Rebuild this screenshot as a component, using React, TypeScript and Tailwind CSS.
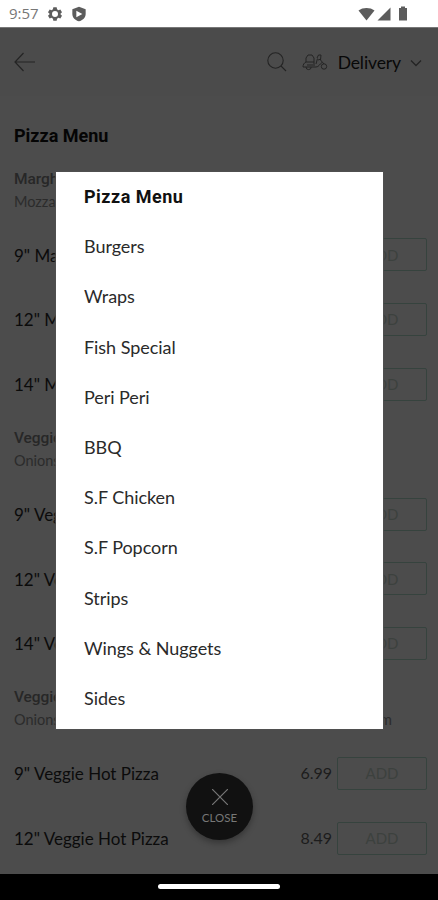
import { clsx } from "clsx";

type Section = { name: string; toppings: string; rows: { name: string; price: string }[] };

const SECTIONS: Section[] = [
  {
    name: "Margherita",
    toppings: "Mozzarella & tomato",
    rows: [
      { name: '9" Margherita', price: "5.99" },
      { name: '12" Margherita', price: "7.49" },
      { name: '14" Margherita', price: "9.49" },
    ],
  },
  {
    name: "Veggie Supreme",
    toppings: "Onions, peppers & olives",
    rows: [
      { name: '9" Veggie Supreme', price: "6.99" },
      { name: '12" Veggie Supreme', price: "8.49" },
      { name: '14" Veggie Supreme', price: "10.49" },
    ],
  },
  {
    name: "Veggie Hot",
    toppings: "Onions, green peppers, jalapenos, chillies & mushroom",
    rows: [
      { name: '9" Veggie Hot Pizza', price: "6.99" },
      { name: '12" Veggie Hot Pizza', price: "8.49" },
    ],
  },
];

const CATEGORIES = [
  "Pizza Menu",
  "Burgers",
  "Wraps",
  "Fish Special",
  "Peri Peri",
  "BBQ",
  "S.F Chicken",
  "S.F Popcorn",
  "Strips",
  "Wings & Nuggets",
  "Sides",
];

function StatusBar() {
  return (
    <div className="flex h-[27px] shrink-0 items-center bg-white pl-[9px] pr-[30px] text-[#5c5c5c]">
      <span className="w-[31px] font-['Open_Sans',sans-serif] text-[15px] leading-none text-[#777]">
        9:57
      </span>
      <svg className="ml-[7px] size-4" viewBox="0 0 24 24" fill="currentColor">
        <path
          fillRule="evenodd"
          d="M9.500 2h5l.6 3 2 1.200 2.900-1 2.500 4.300-2.300 2v1l2.300 2-2.500 4.300-2.900-1-2 1.200-.6 3h-5l-.6-3-2-1.200-2.900 1-2.500-4.300 2.300-2v-1l-2.300-2L4 5.200l2.900 1 2-1.200zM12 7.500a4.500 4.500 0 1 0 0 9a4.500 4.500 0 1 0 0-9z"
        />
      </svg>
      <svg className="ml-[8px] size-4" viewBox="0 0 24 24" fill="currentColor">
        <path
          fillRule="evenodd"
          d="M12 1l10 4v7c0 5.500-4.500 9.500-10 11C6.500 21.500 2 17.500 2 12V5zM8 7v10l9-5z"
        />
      </svg>
      <svg className="ml-auto h-[14px] w-[17px]" viewBox="0 0 17 14" fill="currentColor">
        <path d="M8.500 13.500L.5 3.500C5 .2 12 .2 16.500 3.500z" />
      </svg>
      <svg className="ml-[2px] size-[14px]" viewBox="0 0 14 14" fill="currentColor">
        <path d="M.5 13.500L13.500.5v13z" />
      </svg>
      <svg className="ml-[7px] h-[15px] w-[10px]" viewBox="0 0 10 15" fill="currentColor">
        <path d="M3 .5h4V2h2v12.500H1V2h2z" />
      </svg>
    </div>
  );
}

function Header() {
  return (
    <header className="flex h-[69px] shrink-0 items-center border-t border-[#777] bg-[#4b4b4b] pl-[14px] pr-[16px] text-[#242424]">
      <svg className="h-5 w-[22px]" viewBox="0 0 22 20" fill="none" stroke="currentColor" strokeWidth="1.200">
        <path d="M21 10H1M9.500 1L1 10l8.500 9" />
      </svg>
      <svg className="ml-auto size-5" viewBox="0 0 20 20" fill="none" stroke="currentColor" strokeWidth="1.100">
        <circle cx="8.500" cy="8.500" r="7.700" />
        <path d="M14 14l5 5" />
      </svg>
      <svg
        className="ml-[15px] h-[19px] w-[26px]"
        viewBox="0 0 26 19"
        fill="none"
        stroke="currentColor"
        strokeWidth="1"
      >
        <path d="M4 9V5l2-3h4l2 3v4zM4 9C2 10 1 11.500 1 14h13c3 0 3.500-3 6-4.500M12 13V9M5 12h6M15 5l1.500-3H19l-.5 5 3.500 4M16 7l3-1M15.500 5.500L14 11" />
        <path d="M4 14a2.600 2.600 0 0 0 5.200 0" />
        <circle cx="22" cy="13.500" r="2.700" />
      </svg>
      <span className="ml-[10px] pt-[2px] text-[17.500px] tracking-[-0.100px] text-[#080808]">Delivery</span>
      <svg className="ml-[9px] mt-[2px] h-2 w-3" viewBox="0 0 12 8" fill="none" stroke="currentColor" strokeWidth="1.300">
        <path d="M1 1.500l5 5 5-5" />
      </svg>
    </header>
  );
}

function MenuSection({ section, fill }: { section: Section; fill: boolean }) {
  return (
    <section className="h-[259.300px] shrink-0 text-[#0b0b0b]">
      <h3 className="h-6 font-[Roboto,sans-serif] text-[15.500px] font-medium leading-6 tracking-[-0.100px] text-[#272727]">
        {section.name}
      </h3>
      <p
        className={clsx(
          "h-[23px] text-[14.500px] leading-[22px] text-[#2b2b2b]",
          fill && "w-[378px] [text-align-last:justify]",
        )}
      >
        {section.toppings}
      </p>
      <div className="mt-[9px]">
        {section.rows.map((row) => (
          <div key={row.name} className="flex h-[64.700px] items-center">
            <span className="pt-px text-[17px]">{row.name}</span>
            <span className="ml-auto mr-[5px] text-[16px] text-[#1c1c1c]">{row.price}</span>
            <button className="h-[33px] w-[90px] rounded-[2px] border border-[#36433e] text-[15px] text-[#3c413e]">
              ADD
            </button>
          </div>
        ))}
      </div>
    </section>
  );
}

export default function App() {
  return (
    <div className="relative flex h-[900px] w-[438px] flex-col overflow-hidden bg-[#4c4c4c] font-[Lato,sans-serif]">
      <StatusBar />
      <Header />
      <main className="flex min-h-0 flex-1 flex-col overflow-hidden pl-[14px] pr-[11px]">
        <h2 className="mt-[28px] h-6 shrink-0 font-[Roboto,sans-serif] text-[18px] font-bold leading-6 text-[#050505]">
          Pizza Menu
        </h2>
        <div className="mt-[18.500px] shrink-0">
          {SECTIONS.map((section, i) => (
            <MenuSection key={section.name} section={section} fill={i === SECTIONS.length - 1} />
          ))}
        </div>
      </main>
      <footer className="flex h-[26px] shrink-0 justify-center bg-black pt-[10px]">
        <div className="h-[5px] w-[122px] rounded-full bg-white" />
      </footer>

      <div
        role="dialog"
        className="absolute left-[56px] top-[172px] h-[557px] w-[327px] bg-white shadow-[0_0_1px_1px_rgba(80,80,80,0.8)]"
      >
        <ul className="pl-7">
          {CATEGORIES.map((category, i) => (
            <li
              key={category}
              className={clsx(
                "h-[50.200px] leading-[49.500px]",
                i === 0
                  ? "font-[Roboto,sans-serif] text-[18px] font-bold tracking-[0.500px] text-[#111]"
                  : "text-[18px] tracking-[-0.050px] text-[#2a2a2a]",
              )}
            >
              {category}
            </li>
          ))}
        </ul>
      </div>

      <button className="absolute left-[186px] top-[773px] flex size-[67px] flex-col items-center rounded-full bg-[#111] pt-[16px] text-[#777] shadow-[0_3px_6px_rgba(0,0,0,0.3)]">
        <svg className="size-4" viewBox="0 0 16 16" fill="none" stroke="currentColor" strokeWidth="1.200">
          <path d="M0 0l16 16M16 0L0 16" />
        </svg>
        <span className="mt-[6px] text-[11.500px] leading-[14px]">CLOSE</span>
      </button>
    </div>
  );
}
